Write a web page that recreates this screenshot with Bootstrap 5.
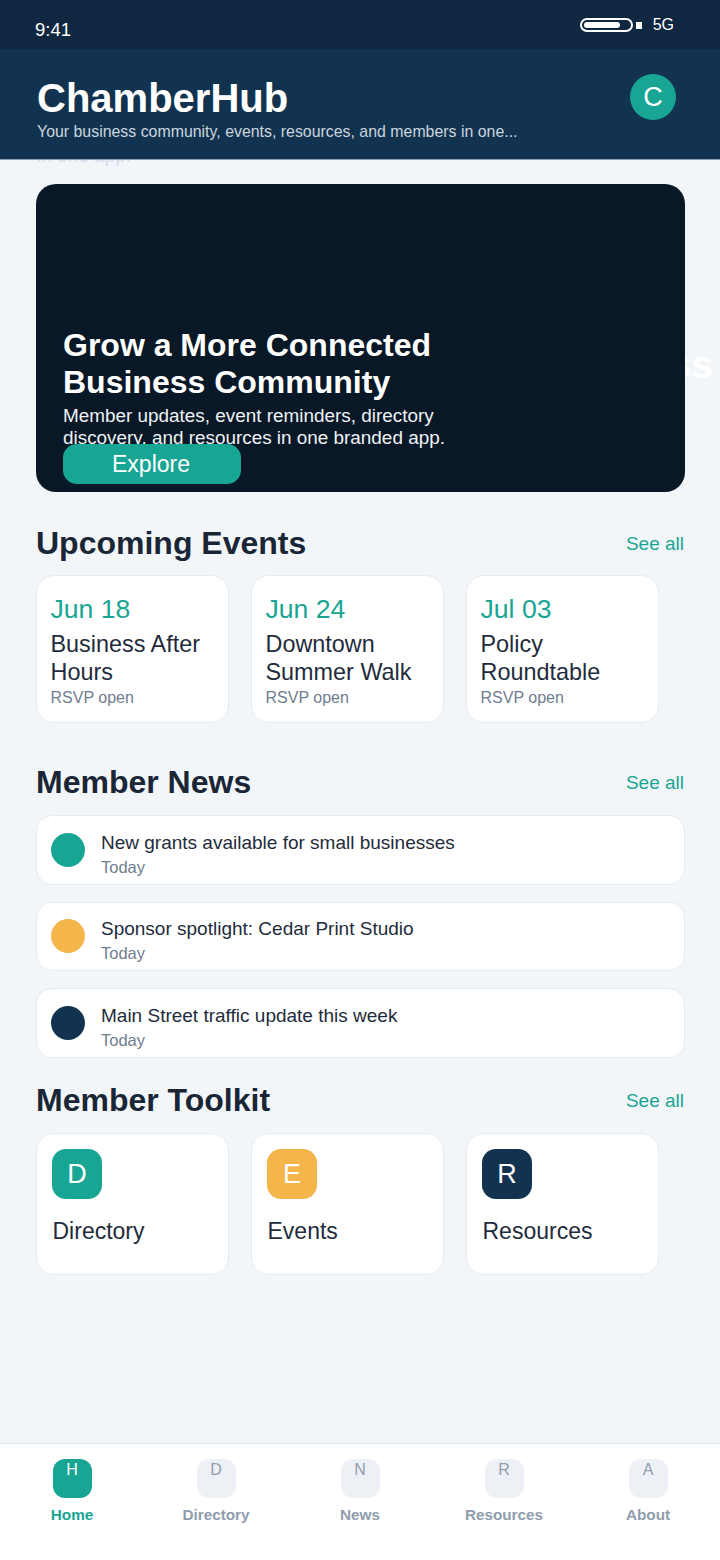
<!DOCTYPE html>
<html>
<head>
  <meta charset="UTF-8">
  <title>ChamberHub</title>
  <link href="https://cdn.jsdelivr.net/npm/bootstrap@5.3.0/dist/css/bootstrap.min.css" rel="stylesheet">
  <style>
    body { font-family: "Liberation Sans", Arial, sans-serif; background: #f3f6f9; color: #1a2636; width: 720px; height: 1560px; overflow: hidden; }
    .app-shell { height: 1560px; position: relative; overflow: hidden; }
    .status-bar { height: 49px; background: #0f2740; color: #fff; padding: 0 46px 0 35px; }
    .status-time { font-size: 18.5px; line-height: 22px; padding-top: 19px; }
    .status-right { padding-top: 18px; font-size: 16px; line-height: 22px; }
    .batt-body { width: 53px; height: 14px; border: 2px solid #fff; border-radius: 8px; padding: 2px; display: block; }
    .batt-fill { display: block; width: 36px; height: 6px; background: #fff; border-radius: 3px; }
    .batt-tip { width: 6px; height: 7px; background: #fff; display: block; margin: 4px 11px 0 3px; }
    .status-net { margin-top: -4px; }
    .top-bar { height: 111px; background: #12334f; color: #fff; padding: 26px 44px 0 37px; border-bottom: 1px solid #8b9db0; position: relative; z-index: 2; }
    .brand-title { font-size: 40px; font-weight: 700; line-height: 47px; margin: 0; }
    .brand-sub { font-size: 15.9px; line-height: 19px; color: #cbd5df; margin: 0; }
    .avatar-c { width: 46px; height: 46px; border-radius: 50%; background: #18a594; font-size: 27px; margin-top: -1px; }
    .ghost-sub { position: absolute; left: 37px; top: 145px; font-size: 19px; line-height: 22px; color: #d3deeb; }
    .ghost-word { position: absolute; right: 7px; top: 342px; font-size: 39px; font-weight: 700; line-height: 45px; color: #fff; }
    .page-body { padding: 24px 35px 0 36px; }
    .hero-box { height: 308px; background: #091827; border-radius: 20px; color: #fff; padding: 0 27px 8px; overflow: hidden; position: relative; z-index: 1; }
    .hero-title { font-size: 32px; font-weight: 700; line-height: 37px; margin: 0 0 4px; width: 420px; }
    .hero-text { font-size: 18.9px; line-height: 22px; margin: 0 0 -5px; width: 400px; color: #eef2f5; }
    .hero-btn { width: 178px; height: 40px; background: #18a594; color: #fff; border-radius: 14px; font-size: 23px; line-height: 38px; padding: 0 2px 0 0; border: 0; position: relative; }
    .sec-head { height: 44px; margin-bottom: 11px; }
    .sec-first { margin-top: 29px; margin-bottom: 10px; }
    .sec-news { margin-top: 37px; }
    .sec-tools { margin-top: 20.5px; }
    .sec-title { font-size: 32px; font-weight: 700; line-height: 38px; margin: 0; color: #1a2636; }
    .see-all { font-size: 19px; color: #18a594; text-decoration: none; margin: 3px 1px 0 0; }
    .tile { width: 192.5px; background: #fff; border: 1px solid #e6ebf2; border-radius: 18px; }
    .tile + .tile { margin-left: 22.5px; }
    .event-tile { height: 148px; padding: 16px 13.5px; }
    .event-date { font-size: 26.6px; line-height: 34px; color: #18a594; }
    .event-name { font-size: 23.4px; line-height: 28px; margin-top: 4px; color: #1f2c3c; }
    .event-note { font-size: 16px; line-height: 24px; color: #6f7d8f; }
    .news-stack { gap: 17px; }
    .news-row { height: 69.5px; background: #fff; border: 1px solid #e6ebf2; border-radius: 16px; padding: 0 14px; }
    .news-dot { width: 34px; height: 34px; border-radius: 50%; flex-shrink: 0; }
    .news-copy { margin-top: 9px; }
    .news-title { font-size: 19px; line-height: 25px; color: #1f2c3c; }
    .news-when { font-size: 16.5px; line-height: 24px; color: #6f7d8f; }
    .tool-tile { height: 142px; padding: 15px 15px; }
    .tool-icon { width: 50px; height: 50px; border-radius: 14px; color: #fff; font-size: 27px; padding-top: 1px; }
    .tool-name { font-size: 23px; line-height: 28px; margin-top: 18px; padding-left: .5px; color: #1f2c3c; }
    .c-teal { background: #18a594; }
    .c-gold { background: #f4b64b; }
    .c-navy { background: #12334f; }
    .bottom-tabs { position: absolute; left: 0; right: 0; top: 1443px; bottom: 0; background: #fff; border-top: 1px solid #dfe6ee; padding-top: 15px; }
    .tab-cell { width: 144px; }
    .tab-icon { width: 39px; height: 39px; border-radius: 12px; background: #edf1f6; color: #8f9dae; font-size: 16px; line-height: 21px; text-align: center; margin-bottom: 5px; }
    .tab-label { font-size: 15.3px; font-weight: 700; line-height: 24px; color: #8f9dae; }
    .tab-on .tab-icon { background: #18a594; color: #fff; }
    .tab-on .tab-label { color: #18a594; }
  </style>
</head>
<body>
  <div class="app-shell">
    <!-- status bar -->
    <div class="status-bar d-flex justify-content-between">
      <div class="status-time">9:41</div>
      <div class="status-right d-flex align-items-start">
        <span class="batt-body"><span class="batt-fill"></span></span>
        <span class="batt-tip"></span>
        <span class="status-net">5G</span>
      </div>
    </div>

    <!-- header -->
    <div class="top-bar d-flex justify-content-between align-items-start">
      <div>
        <h1 class="brand-title">ChamberHub</h1>
        <p class="brand-sub">Your business community, events, resources, and members in one...</p>
      </div>
      <div class="avatar-c d-flex align-items-center justify-content-center">C</div>
    </div>
    <div class="ghost-sub">in one app.</div>
    <div class="ghost-word">ss</div>

    <div class="page-body">
      <!-- hero -->
      <div class="hero-box d-flex flex-column justify-content-end align-items-start">
        <h2 class="hero-title">Grow a More Connected Business Community</h2>
        <p class="hero-text">Member updates, event reminders, directory discovery, and resources in one branded app.</p>
        <button class="btn hero-btn">Explore</button>
      </div>

      <!-- events -->
      <div class="sec-head sec-first d-flex justify-content-between align-items-center">
        <h3 class="sec-title">Upcoming Events</h3>
        <a class="see-all" href="#">See all</a>
      </div>
      <div class="d-flex">
        <div class="tile event-tile">
          <div class="event-date">Jun 18</div>
          <div class="event-name">Business After Hours</div>
          <div class="event-note">RSVP open</div>
        </div>
        <div class="tile event-tile">
          <div class="event-date">Jun 24</div>
          <div class="event-name">Downtown Summer Walk</div>
          <div class="event-note">RSVP open</div>
        </div>
        <div class="tile event-tile">
          <div class="event-date">Jul 03</div>
          <div class="event-name">Policy Roundtable</div>
          <div class="event-note">RSVP open</div>
        </div>
      </div>

      <!-- news -->
      <div class="sec-head sec-news d-flex justify-content-between align-items-center">
        <h3 class="sec-title">Member News</h3>
        <a class="see-all" href="#">See all</a>
      </div>
      <div class="news-stack d-flex flex-column">
        <div class="news-row d-flex align-items-center gap-3">
          <div class="news-dot c-teal"></div>
          <div class="news-copy">
            <div class="news-title">New grants available for small businesses</div>
            <div class="news-when">Today</div>
          </div>
        </div>
        <div class="news-row d-flex align-items-center gap-3">
          <div class="news-dot c-gold"></div>
          <div class="news-copy">
            <div class="news-title">Sponsor spotlight: Cedar Print Studio</div>
            <div class="news-when">Today</div>
          </div>
        </div>
        <div class="news-row d-flex align-items-center gap-3">
          <div class="news-dot c-navy"></div>
          <div class="news-copy">
            <div class="news-title">Main Street traffic update this week</div>
            <div class="news-when">Today</div>
          </div>
        </div>
      </div>

      <!-- toolkit -->
      <div class="sec-head sec-tools d-flex justify-content-between align-items-center">
        <h3 class="sec-title">Member Toolkit</h3>
        <a class="see-all" href="#">See all</a>
      </div>
      <div class="d-flex">
        <div class="tile tool-tile">
          <div class="tool-icon c-teal d-flex align-items-center justify-content-center">D</div>
          <div class="tool-name">Directory</div>
        </div>
        <div class="tile tool-tile">
          <div class="tool-icon c-gold d-flex align-items-center justify-content-center">E</div>
          <div class="tool-name">Events</div>
        </div>
        <div class="tile tool-tile">
          <div class="tool-icon c-navy d-flex align-items-center justify-content-center">R</div>
          <div class="tool-name">Resources</div>
        </div>
      </div>
    </div>

    <!-- bottom nav -->
    <div class="bottom-tabs d-flex">
      <div class="tab-cell tab-on d-flex flex-column align-items-center"><div class="tab-icon">H</div><div class="tab-label">Home</div></div>
      <div class="tab-cell d-flex flex-column align-items-center"><div class="tab-icon">D</div><div class="tab-label">Directory</div></div>
      <div class="tab-cell d-flex flex-column align-items-center"><div class="tab-icon">N</div><div class="tab-label">News</div></div>
      <div class="tab-cell d-flex flex-column align-items-center"><div class="tab-icon">R</div><div class="tab-label">Resources</div></div>
      <div class="tab-cell d-flex flex-column align-items-center"><div class="tab-icon">A</div><div class="tab-label">About</div></div>
    </div>
  </div>
  <script src="https://cdn.jsdelivr.net/npm/bootstrap@5.3.0/dist/js/bootstrap.bundle.min.js"></script>
</body>
</html>
